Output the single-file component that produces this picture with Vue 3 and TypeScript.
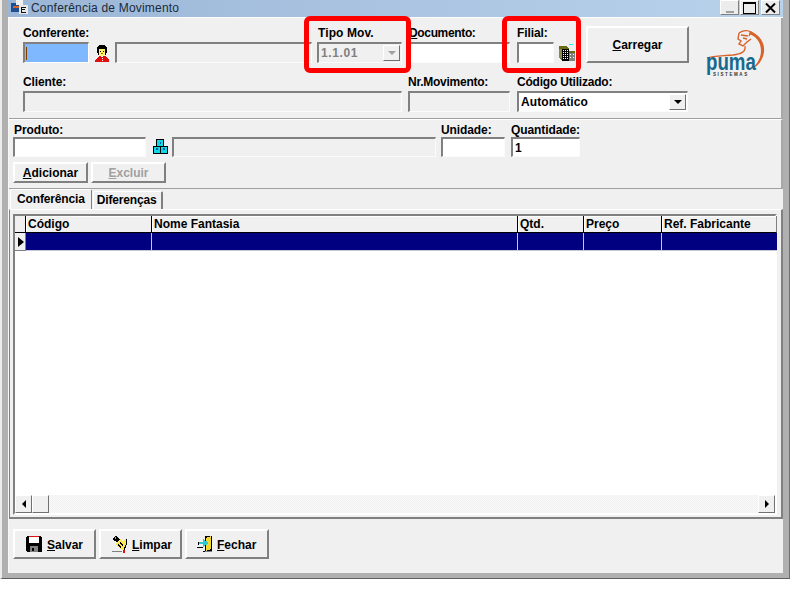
<script setup lang="ts">
// Delphi-style "Conferência de Movimento" form: classic bevelled controls on a faded window frame.
interface GridColumn {
  title: string
  width: number
}

const columns: GridColumn[] = [
  { title: 'Código', width: 126 },
  { title: 'Nome Fantasia', width: 366 },
  { title: 'Qtd.', width: 66 },
  { title: 'Preço', width: 78 },
  { title: 'Ref. Fabricante', width: 115 },
]
</script>

<template>
  <div class="window">
    <div class="titlebar">
      <svg class="title-icon" width="17" height="14" viewBox="0 0 17 14" shape-rendering="crispEdges">
        <rect x="0" y="3" width="8" height="9" fill="#1f4f8f" />
        <rect x="5" y="0" width="7" height="5" fill="#f0f0f0" />
        <rect x="2" y="6" width="9" height="2" fill="#d8622a" />
        <rect x="8" y="5" width="9" height="9" fill="#e8e8e8" />
        <rect x="10" y="7" width="5" height="1" fill="#111" />
        <rect x="10" y="7" width="1" height="6" fill="#111" />
        <rect x="10" y="9" width="4" height="1" fill="#111" />
        <rect x="10" y="12" width="5" height="1" fill="#111" />
      </svg>
      <span class="title-text">Conferência de Movimento</span>
      <div class="win-controls">
        <button class="win-btn"><span class="glyph-min"></span></button>
        <button class="win-btn"><span class="glyph-max"></span></button>
        <button class="win-btn close">
          <svg width="11" height="10" viewBox="0 0 11 10"><path d="M1 0.5 L10 9.5 M10 0.5 L1 9.5" stroke="#000" stroke-width="2" fill="none" /></svg>
        </button>
      </div>
    </div>

    <div class="form">
      <section class="panel-top">
        <div class="row first">
          <div class="field w-conferente">
            <label>Conferente:</label>
            <div class="input focused"><span class="caret"></span></div>
          </div>
          <svg class="icon-person" width="14" height="17" viewBox="0 0 14 17" shape-rendering="crispEdges">
            <rect x="4" y="0" width="6" height="1" fill="#000" />
            <rect x="3" y="1" width="8" height="1" fill="#000" />
            <rect x="2" y="2" width="10" height="6" fill="#000" />
            <rect x="3" y="8" width="8" height="2" fill="#000" />
            <rect x="4" y="4" width="6" height="6" fill="#fff36a" />
            <rect x="5" y="6" width="1" height="1" fill="#000" />
            <rect x="8" y="6" width="1" height="1" fill="#000" />
            <rect x="6" y="8" width="2" height="1" fill="#a06000" />
            <rect x="5" y="10" width="4" height="1" fill="#fff36a" />
            <path d="M0 17 L0 15 L2 13 L4 11 L10 11 L12 13 L14 15 L14 17 Z" fill="#e01010" />
            <rect x="6" y="11" width="2" height="1" fill="#fff" />
            <rect x="7" y="13" width="1" height="1" fill="#fff" />
            <rect x="7" y="15" width="1" height="1" fill="#fff" />
          </svg>
          <div class="field w-nome">
            <label>&nbsp;</label>
            <div class="input disabled"></div>
          </div>
          <div class="field w-tipo">
            <label>Tipo Mov.</label>
            <div class="input select disabled">
              <span class="value muted">1.1.01</span>
              <span class="drop off"><i></i></span>
            </div>
          </div>
          <div class="field w-doc">
            <label><u>D</u>ocumento:</label>
            <div class="input"></div>
          </div>
          <div class="field w-filial">
            <label>Filial:</label>
            <div class="input"></div>
          </div>
          <svg class="icon-building" width="18" height="18" viewBox="0 0 18 18" shape-rendering="crispEdges">
            <rect x="11" y="0" width="4" height="1" fill="#30e8e8" />
            <path d="M1 2 L8 2 L11 5 L11 16 L4 16 L1 14 Z" fill="#6c6c18" />
            <rect x="1" y="5" width="3" height="9" fill="#8a8a50" />
            <rect x="4" y="5" width="7" height="12" fill="#000" />
            <rect x="5" y="6" width="1" height="1" fill="#fff" /><rect x="7" y="6" width="1" height="1" fill="#fff" /><rect x="9" y="6" width="1" height="1" fill="#fff" />
            <rect x="5" y="8" width="1" height="1" fill="#fff" /><rect x="7" y="8" width="1" height="1" fill="#fff" /><rect x="9" y="8" width="1" height="1" fill="#fff" />
            <rect x="5" y="10" width="1" height="1" fill="#fff" /><rect x="7" y="10" width="1" height="1" fill="#fff" /><rect x="9" y="10" width="1" height="1" fill="#fff" />
            <rect x="5" y="12" width="1" height="1" fill="#fff" /><rect x="7" y="12" width="1" height="1" fill="#fff" /><rect x="9" y="12" width="1" height="1" fill="#fff" />
            <rect x="5" y="14" width="1" height="1" fill="#fff" /><rect x="7" y="14" width="1" height="1" fill="#fff" /><rect x="9" y="14" width="1" height="1" fill="#fff" />
            <rect x="11" y="7" width="6" height="2" fill="#6c6c18" />
            <rect x="11" y="9" width="6" height="8" fill="#808080" />
            <rect x="12" y="10" width="1" height="1" fill="#fff" /><rect x="15" y="10" width="1" height="1" fill="#fff" />
            <rect x="12" y="13" width="1" height="1" fill="#fff" /><rect x="15" y="13" width="1" height="1" fill="#fff" />
          </svg>
          <button class="btn carregar"><span><u>C</u>arregar</span></button>
          <svg class="logo" width="62" height="50" viewBox="0 0 62 50">
            <path d="M40 18 C41 24 36 26 28 27 C18 28 8 28 2 30" fill="none" stroke="#d8622a" stroke-width="1.3" />
            <path d="M45 3 C55 7 60 15 59 24 C58 32 53 38 47 41 C52 36 56 30 56 23 C56 14 51 8 44 6 Z" fill="#d8622a" />
            <path d="M34 5 C38 2 43 2 46 4 L44 8 M34 5 L33 11 L36 13 L34 16 L38 18 L42 14 L46 11 M36 7 L43 8 M38 10 L42 11" fill="none" stroke="#d8622a" stroke-width="1.4" />
            <text x="1" y="42" class="logo-word" transform="translate(0.2 0) scale(0.78 1)">puma</text>
            <text x="8" y="47.5" class="logo-sub">SISTEMAS</text>
          </svg>
        </div>
        <div class="row second">
          <div class="field w-cliente">
            <label>Cliente:</label>
            <div class="input disabled"></div>
          </div>
          <div class="field w-doc">
            <label>Nr.Movimento:</label>
            <div class="input disabled"></div>
          </div>
          <div class="field w-codigo">
            <label>Código Utilizado:</label>
            <div class="input select">
              <span class="value">Automático</span>
              <span class="drop"><i></i></span>
            </div>
          </div>
        </div>
      </section>

      <section class="panel-mid">
        <div class="row">
          <div class="field w-produto">
            <label>Produto:</label>
            <div class="input"></div>
          </div>
          <svg class="icon-boxes" width="15" height="15" viewBox="0 0 16 16" shape-rendering="crispEdges">
            <rect x="3" y="0" width="9" height="8" fill="#000" />
            <rect x="4" y="1" width="7" height="6" fill="#10d8e8" />
            <rect x="0" y="7" width="16" height="9" fill="#000" />
            <rect x="1" y="8" width="6" height="7" fill="#10d8e8" />
            <rect x="9" y="8" width="6" height="7" fill="#10d8e8" />
            <rect x="7" y="3" width="2" height="2" fill="#1060a0" />
            <rect x="3" y="10" width="2" height="2" fill="#1060a0" />
            <rect x="11" y="10" width="2" height="2" fill="#1060a0" />
          </svg>
          <div class="field w-prodnome">
            <label>&nbsp;</label>
            <div class="input disabled"></div>
          </div>
          <div class="field w-unidade">
            <label>Unidade:</label>
            <div class="input"></div>
          </div>
          <div class="field w-qtd">
            <label>Quantidade:</label>
            <div class="input"><span class="value">1</span></div>
          </div>
        </div>
        <div class="row actions">
          <button class="btn small"><span><u>A</u>dicionar</span></button>
          <button class="btn small off"><span><u>E</u>xcluir</span></button>
        </div>
      </section>

      <div class="tabs">
        <div class="tab active">Conferência</div>
        <div class="tab">Diferenças</div>
      </div>

      <section class="tab-page">
        <div class="grid">
          <div class="grid-head">
            <div class="indicator"></div>
            <div v-for="col in columns" :key="col.title" class="head-cell" :style="{ width: col.width + 'px' }">{{ col.title }}</div>
          </div>
          <div class="grid-row">
            <div class="indicator"><i class="arrow"></i></div>
            <div v-for="col in columns" :key="col.title" class="row-cell" :style="{ width: col.width + 'px' }"></div>
          </div>
          <div class="grid-empty"></div>
          <div class="scrollbar">
            <div class="sb-btn"><i class="sb-left"></i></div>
            <div class="sb-btn thumb"></div>
            <div class="sb-track"></div>
            <div class="sb-btn"><i class="sb-right"></i></div>
          </div>
        </div>
      </section>

      <footer class="footer">
        <button class="btn action">
          <svg width="16" height="16" viewBox="0 0 16 16" shape-rendering="crispEdges">
            <path d="M1 0 H14 L16 2 V15 L15 16 H1 L0 15 V1 Z" fill="#000" />
            <rect x="3" y="0" width="10" height="1" fill="#e01010" />
            <rect x="3" y="1" width="10" height="6" fill="#fff" />
            <rect x="4" y="10" width="8" height="6" fill="#808080" />
            <rect x="6" y="12" width="2" height="3" fill="#000" />
          </svg>
          <span class="spaced first-label"><u>S</u>alvar</span>
        </button>
        <button class="btn action">
          <svg width="16" height="17" viewBox="0 0 16 17" shape-rendering="crispEdges">
            <path d="M1 2 L4 0 L8 3 L5 6 L1 4 Z" fill="#000" />
            <path d="M3 1 L5 2 L3 3 Z" fill="#30d0e0" />
            <path d="M5 6 L8 3 L11 5 L14 3 L14 10 L12 14 L8 13 L4 9 Z" fill="#ffe850" />
            <path d="M8 6 L11 10 M6 8 L9 12 M14 3 L14 9 L12 14" stroke="#000" stroke-width="1" fill="none" />
            <rect x="0" y="15" width="10" height="1" fill="#808080" />
            <rect x="11" y="14" width="2" height="3" fill="#e01010" />
          </svg>
          <span class="spaced"><u>L</u>impar</span>
        </button>
        <button class="btn action tight">
          <svg width="16" height="17" viewBox="0 0 16 17" shape-rendering="crispEdges">
            <rect x="8" y="0" width="7" height="15" fill="#000" />
            <path d="M9 2 L14 0 L14 13 L9 15 Z" fill="#f0d830" />
            <path d="M2 6 L6 6 L6 3 L11 6 L11 8 L6 11 L6 8 L2 8 Z" fill="#30c8d0" />
            <rect x="1" y="6" width="1" height="3" fill="#000" />
            <rect x="0" y="11" width="6" height="1" fill="#000" />
            <rect x="6" y="15" width="2" height="1" fill="#000" />
            <rect x="8" y="15" width="7" height="1" fill="#808080" />
          </svg>
          <span class="spaced"><u>F</u>echar</span>
        </button>
      </footer>
    </div>

    <!-- red callouts drawn over the screenshot -->
    <div class="callout callout-tipo"></div>
    <div class="callout callout-filial"></div>
  </div>
</template>

<style scoped>
.window {
  position: relative;
  width: 790px;
  height: 579px;
  box-sizing: border-box;
  padding: 0 6px 5px 6px;
  display: flex;
  flex-direction: column;
  background: #b0b0b0;
  border-left: 2px solid #ececec;
  border-right: 1px solid #707070;
  border-bottom: 1px solid #606060;
  font-family: "Liberation Sans", Arial, sans-serif;
  font-size: 12px;
  color: #000;
}
.titlebar {
  height: 18px;
  box-sizing: border-box;
  flex: none;
  display: flex;
  align-items: flex-start;
  background: linear-gradient(to right, #9bb6d6, #b9d2ec);
  border-bottom: 1px solid #fff;
}
.title-icon { margin: 0 0 0 3px; }
.title-text {
  margin: 1px 0 0 3px;
  line-height: 14px;
  color: #1b2a3a;
  letter-spacing: 0.2px;
}
.win-controls {
  margin-left: auto;
  margin-right: 3px;
  display: flex;
  gap: 1px;
}
.win-btn {
  width: 19px;
  height: 15px;
  padding: 0;
  background: #ececec;
  border: 1px solid #fff;
  border-right-color: #808080;
  border-bottom-color: #808080;
  display: flex;
  align-items: center;
  justify-content: center;
}
.win-btn.close { margin-left: 1px; }
.glyph-min { width: 8px; height: 2px; margin-top: 8px; background: #a0a0a0; }
.glyph-max { width: 11px; height: 9px; border: 1px solid #000; border-top-width: 2px; box-sizing: content-box; }

.form {
  flex: 1;
  display: flex;
  flex-direction: column;
  background: #f0f0f0;
  border-left: 1px solid #f8f8f8;
}
.panel-top {
  height: 101px;
  flex: none;
  box-sizing: border-box;
  padding: 9px 0 0 14px;
  border-bottom: 1px solid #a0a0a0;
  border-right: 2px solid #a8a8a8;
}
.panel-mid {
  height: 70px;
  flex: none;
  box-sizing: border-box;
  padding: 4px 0 0 4px;
  border-bottom: 1px solid #a0a0a0;
  border-right: 2px solid #a8a8a8;
  border-top: 1px solid #fff;
}
.row { display: flex; align-items: flex-start; }
.first { height: 48px; }

.field { display: flex; flex-direction: column; flex: none; }
.field label {
  display: block;
  box-sizing: border-box;
  height: 15px;
  line-height: 13px;
  font-weight: bold;
  white-space: nowrap;
  letter-spacing: -0.1px;
}
.panel-mid .field label { height: 13px; padding-left: 1px; }
.second .field label { height: 16px; padding-top: 1px; }

.input {
  box-sizing: border-box;
  height: 21px;
  background: #fff;
  border: 2px solid #808080;
  border-right: 1px solid #fbfbfb;
  border-bottom: 1px solid #fbfbfb;
  display: flex;
  align-items: center;
  overflow: hidden;
}
.panel-mid .input { height: 20px; }
.input.disabled { background: #f0f0f0; }
.input.focused { background: #80b8ff; border-right-color: #fff; border-bottom-color: #fff; }
.caret { width: 1px; height: 13px; margin-left: 1px; background: #804000; }
.value { font-weight: bold; padding-left: 2px; white-space: nowrap; letter-spacing: 0.1px; }
.muted { color: #808080; letter-spacing: 0.6px; }
.select { position: relative; }
.drop {
  margin-left: auto;
  margin-right: 1px;
  box-sizing: border-box;
  width: 17px;
  height: 16px;
  background: #f0f0f0;
  border: 1px solid #fff;
  border-right-color: #707070;
  border-bottom-color: #707070;
  display: flex;
  align-items: center;
  justify-content: center;
}
.drop i {
  width: 0;
  height: 0;
  border-left: 4px solid transparent;
  border-right: 4px solid transparent;
  border-top: 4px solid #000;
}
.drop.off i { border-top-color: #a0a0a0; }

.w-conferente { width: 66px; }
.icon-person { margin: 18px 0 0 6px; flex: none; }
.w-nome { width: 197px; margin-left: 6px; }
.w-tipo { width: 85px; margin-left: 5px; }
.w-tipo label { padding-left: 1px; letter-spacing: 0.1px; }
.w-doc { width: 102px; margin-left: 6px; }
.w-doc label { letter-spacing: -0.25px; }
.first .w-doc label { padding-left: 1px; letter-spacing: -0.35px; }
.w-filial { width: 37px; margin-left: 7px; }
.icon-building { margin: 17px 0 0 4px; flex: none; }
.carregar { width: 103px; height: 37px; margin: -1px 0 0 10px; flex: none; }
.logo { margin: 1px 0 0 16px; flex: none; }
.logo-word { font: bold 24px "Liberation Sans", Arial, sans-serif; fill: #17698f; }
.logo-sub { font: bold 4.5px "Liberation Sans", Arial, sans-serif; fill: #333; letter-spacing: 1.6px; }
.w-cliente { width: 379px; }
.w-codigo { width: 171px; margin-left: 7px; }
.w-codigo label { letter-spacing: -0.2px; }

.w-produto { width: 133px; }
.icon-boxes { margin: 15px 0 0 7px; flex: none; }
.w-prodnome { width: 264px; margin-left: 4px; }
.w-unidade { width: 64px; margin-left: 5px; }
.w-qtd { width: 69px; margin-left: 6px; }
.w-prodnome label, .w-unidade label, .w-qtd label { padding-left: 0 !important; }

.actions { gap: 3px; margin-top: 5px; }
.btn {
  box-sizing: border-box;
  padding: 0;
  background: #f0f0f0;
  border: 2px solid #fff;
  border-right-color: #808080;
  border-bottom-color: #808080;
  font: bold 12px "Liberation Sans", Arial, sans-serif;
  color: #000;
  display: flex;
  align-items: center;
  justify-content: center;
  white-space: nowrap;
}
.btn.small { width: 75px; height: 21px; }
.btn.off { color: #a0a0a0; }

.tabs {
  height: 20px;
  flex: none;
  display: flex;
  align-items: flex-end;
  padding-left: 1px;
  gap: 1px;
}
.tab {
  box-sizing: border-box;
  height: 18px;
  padding: 2px 4px 0 3px;
  font-weight: bold;
  background: #f0f0f0;
  border: 1px solid #fff;
  border-right: 2px solid #808080;
  border-bottom: none;
  border-radius: 2px 2px 0 0;
  line-height: 13px;
  letter-spacing: -0.15px;
}
.tab.active {
  height: 20px;
  padding: 3px 6px 0 6px;
  border-right-width: 1px;
  position: relative;
}

.tab-page {
  height: 310px;
  flex: none;
  box-sizing: border-box;
  padding: 4px 4px 2px 4px;
  border-top: 1px solid #fff;
  border-left: 1px solid #808080;
  border-right: 2px solid #808080;
  border-bottom: 2px solid #808080;
}
.grid {
  height: 100%;
  box-sizing: border-box;
  display: flex;
  flex-direction: column;
  background: #fff;
  border: 2px solid #808080;
  border-right: 2px solid #fff;
  border-bottom: 2px solid #fff;
  margin-left: -1px;
}
.grid-head, .grid-row { display: flex; flex: none; }
.grid-head { height: 17px; }
.grid-row { height: 18px; }
.indicator {
  box-sizing: border-box;
  width: 11px;
  flex: none;
  background: #f0f0f0;
  border-right: 1px solid #000;
  border-bottom: 1px solid #000;
  display: flex;
  align-items: center;
  padding-left: 3px;
}
.grid-row .indicator { border-bottom-color: #808080; border-right-color: #808080; }
.head-cell {
  box-sizing: border-box;
  flex: none;
  padding-left: 2px;
  line-height: 17px;
  font-weight: bold;
  background: #f0f0f0;
  border-right: 1px solid #000;
  border-bottom: 1px solid #000;
  white-space: nowrap;
  box-shadow: inset 1px 1px 0 #fff;
}
.head-cell:last-child { border-right-color: #808080; }
.row-cell {
  box-sizing: border-box;
  flex: none;
  background: #000080;
  border-right: 1px solid #c8c8d8;
  border-bottom: 1px solid #c8c8d8;
}
.row-cell:last-child { border-right: none; }
.arrow {
  width: 0;
  height: 0;
  border-top: 5px solid transparent;
  border-bottom: 5px solid transparent;
  border-left: 6px solid #000;
}
.grid-empty { flex: 1; }
.scrollbar { display: flex; height: 18px; flex: none; }
.sb-btn {
  box-sizing: border-box;
  width: 17px;
  flex: none;
  background: #f0f0f0;
  border: 1px solid #fff;
  border-right: 1px solid #707070;
  border-bottom: 1px solid #707070;
  display: flex;
  align-items: center;
  justify-content: center;
}
.sb-left, .sb-right { width: 0; height: 0; border-top: 4px solid transparent; border-bottom: 4px solid transparent; }
.sb-left { border-right: 4px solid #000; }
.sb-right { border-left: 4px solid #000; }
.sb-track {
  flex: 1;
  background: repeating-conic-gradient(#fafafa 0 25%, #f0f0f0 0 50%) 0 0 / 2px 2px;
}

.footer {
  flex: 1;
  display: flex;
  align-items: flex-start;
  gap: 3px;
  padding: 10px 0 0 4px;
}
.btn.action {
  width: 83px;
  height: 30px;
  padding-left: 11px;
  gap: 4px;
  justify-content: flex-start;
}
.btn.action.tight { width: 84px; padding-left: 10px; }
.spaced { margin-top: 2px; }
.first-label { margin-left: 1px; }

.callout {
  position: absolute;
  top: 16px;
  height: 57px;
  box-sizing: border-box;
  border: 5px solid #ff0000;
  border-radius: 6px;
}
.callout-tipo { left: 302px; width: 107px; }
.callout-filial { left: 500px; width: 79px; }
</style>
